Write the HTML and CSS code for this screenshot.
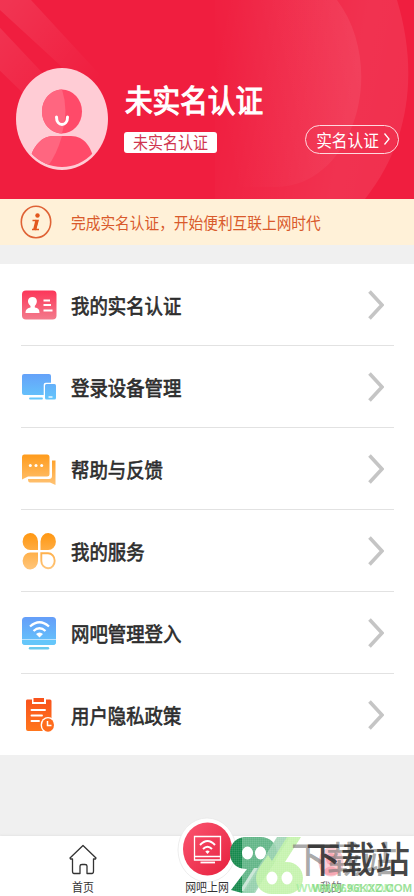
FILE: index.html
```html
<!DOCTYPE html>
<html lang="zh-CN">
<head>
<meta charset="utf-8">
<title>我的</title>
<link rel="stylesheet" href="styles.css">
</head>
<body>
<main class="screen">
  <header class="hero">
    <svg class="hero-bg" viewBox="0 0 414 200" preserveAspectRatio="none" aria-hidden="true">
      <defs>
        <linearGradient id="ring" x1="215" y1="60" x2="414" y2="100" gradientUnits="userSpaceOnUse"><stop offset="0" stop-color="#fff" stop-opacity="0"/><stop offset=".7" stop-color="#fff" stop-opacity=".09"/><stop offset="1" stop-color="#fff" stop-opacity=".08"/></linearGradient>
        <linearGradient id="disc" x1="215" y1="90" x2="361" y2="60" gradientUnits="userSpaceOnUse"><stop offset="0" stop-color="#fff" stop-opacity="0"/><stop offset="1" stop-color="#fff" stop-opacity=".07"/></linearGradient>
        <linearGradient id="beam" x1="0" y1="10" x2="95" y2="85" gradientUnits="userSpaceOnUse"><stop offset="0" stop-color="#fff" stop-opacity=".1"/><stop offset="1" stop-color="#fff" stop-opacity="0"/></linearGradient>
      </defs>
      <path d="M0 0H31L108 84H80L0 10Z M0 28L60 92L40 110L0 71Z" fill="url(#beam)"/>
      <path d="M215 0H397C418 70 411 142 365 200H215Z" fill="url(#ring)"/>
      <path d="M215 0H337C365 37 368 92 350 132C334 170 305 188 276 188H215Z" fill="url(#disc)"/>
    </svg>
    <svg class="avatar" viewBox="0 0 92 102" aria-hidden="true">
      <clipPath id="face"><ellipse cx="46" cy="49.5" rx="44.500" ry="49.500"/></clipPath>
      <ellipse cx="46" cy="51" rx="46" ry="51" fill="#ffccd5"/>
      <g clip-path="url(#face)">
        <path d="M12 102C13 84 23 68 37 68H55C69 68 77 80 80 102Z" fill="#ff4a69"/>
        <path d="M12 102C13 84 23 68 37 68H46Q40 89 29 102Z" fill="#ff6680"/>
      </g>
      <ellipse cx="46" cy="43.500" rx="20" ry="22" fill="#ff4a69"/>
      <path d="M46 21.500C35 21.500 26 31 26 43.500S35 65.500 46 65.500Q53 43 46 21.500Z" fill="#ff6680"/>
      <path d="M40.500 49C40.500 59 51.500 59 51.500 49" fill="none" stroke="#fff" stroke-width="3" stroke-linecap="round"/>
    </svg>
    <div class="identity">
      <h1><span class="tall">未实名认证</span></h1>
      <div class="status"><span class="tall">未实名认证</span></div>
    </div>
    <div class="verify"><span class="tall">实名认证</span>
      <svg width="8" height="14" viewBox="0 0 8 14"><path d="M1.500 1.500L6 7L1.500 12.500" fill="none" stroke="#fff" stroke-width="1.300"/></svg>
    </div>
  </header>
  <div class="notice">
    <svg width="32" height="34" viewBox="0 0 32 34"><ellipse cx="16" cy="17" rx="14.700" ry="15.700" fill="none" stroke="#df6336" stroke-width="1.600"/><circle cx="17.500" cy="10.500" r="2.200" fill="#e2571f"/><path d="M12.500 15.500H18L15.500 24.500H19M12 24.500H16" fill="none" stroke="#e2571f" stroke-width="1.500"/><path d="M16.900 15L14.500 25" stroke="#e2571f" stroke-width="3"/></svg>
    <span class="tall">完成实名认证，开始便利互联上网时代</span>
  </div>
  <svg class="defs" width="0" height="0" aria-hidden="true"><defs>
    <linearGradient id="red" x2="0" y2="1"><stop stop-color="#fc3659"/><stop offset="1" stop-color="#f37b8c"/></linearGradient>
    <linearGradient id="blue" x1="0" y1="4" x2="0" y2="33" gradientUnits="userSpaceOnUse"><stop stop-color="#659ff9"/><stop offset="1" stop-color="#64c8fb"/></linearGradient>
    <linearGradient id="orange" x1="0" y1="2" x2="0" y2="36" gradientUnits="userSpaceOnUse"><stop stop-color="#ff9814"/><stop offset="1" stop-color="#ffc477"/></linearGradient>
    <linearGradient id="fire" x2="0" y2="1"><stop stop-color="#f9531c"/><stop offset="1" stop-color="#ff761d"/></linearGradient>
  </defs></svg>
  <nav class="menu">
    <a class="row">
      <svg class="icon" viewBox="0 0 36 38"><rect x="1" y="4.500" width="34.500" height="29" rx="4" fill="url(#red)"/><path d="M4.500 27C4.500 23 7 22 9.500 21.500V20C5 16 7 11 11.500 11S17.500 16 13.800 20V21.500C17 22 18.500 23 18.500 27Z" fill="#fff"/><path d="M22.500 14.500H29M22.500 19H30M22.500 24.500H31.500" stroke="#fff" stroke-width="1.900"/></svg>
      <span class="tall">我的实名认证</span><svg class="chevron" viewBox="0 0 16 30"><path d="M1.500 1.500L14 15L1.500 28.500"/></svg>
    </a>
    <a class="row">
      <svg class="icon" viewBox="0 0 36 38"><rect x="1" y="6" width="29" height="21" rx="2" fill="url(#blue)"/><path d="M9 30.500H21" stroke="#65c7fb" stroke-width="1.800" stroke-linecap="round"/><rect x="22.700" y="14.700" width="14" height="19" rx="2" fill="#fff"/><rect x="24" y="16" width="11" height="15.500" rx="1.500" fill="url(#blue)"/><path d="M27.500 29H31.500" stroke="#fff" stroke-width="1.300"/></svg>
      <span class="tall">登录设备管理</span><svg class="chevron" viewBox="0 0 16 30"><path d="M1.500 1.500L14 15L1.500 28.500"/></svg>
    </a>
    <a class="row">
      <svg class="icon" viewBox="0 0 36 38"><path d="M31 10.500H34.500V35L29 32.500H9Q7 32.500 7 29H28Q31 29 31 26Z" fill="url(#orange)"/><path d="M3 4.500H26Q28.500 4.500 28.500 7V24Q28.500 26.500 26 26.500H7L1 29.500V7Q1 4.500 3 4.500Z" fill="url(#orange)"/><g fill="#fff"><circle cx="9.300" cy="15.500" r="1.500"/><circle cx="15" cy="15.500" r="1.500"/><circle cx="20.700" cy="15.500" r="1.500"/></g></svg>
      <span class="tall">帮助与反馈</span><svg class="chevron" viewBox="0 0 16 30"><path d="M1.500 1.500L14 15L1.500 28.500"/></svg>
    </a>
    <a class="row">
      <svg class="icon" viewBox="0 0 36 38"><path d="M17 18H9.500A7.700 8.500 0 1 1 17 9.500ZM19.500 18V9.500A7.700 8.500 0 1 1 27 18ZM17 20.500V29A7.700 8.500 0 1 1 9.500 20.500Z" fill="url(#orange)"/><path d="M20.300 21.300H27A6.700 7.500 0 1 1 20.300 29Z" fill="none" stroke="url(#orange)" stroke-width="1.900"/></svg>
      <span class="tall">我的服务</span><svg class="chevron" viewBox="0 0 16 30"><path d="M1.500 1.500L14 15L1.500 28.500"/></svg>
    </a>
    <a class="row">
      <svg class="icon" viewBox="0 0 36 38"><rect x="1" y="3" width="34" height="28" rx="3.500" fill="url(#blue)"/><path d="M1 25H35V28Q35 31 31.500 31H4.500Q1 31 1 28Z" fill="#65c6fa"/><path d="M1 25.500H35" stroke="#b9e2ff" stroke-width="1"/><path d="M9 34.300H27" stroke="#69c9ed" stroke-width="2.400" stroke-linecap="round"/><path d="M9 12.500Q18.500 4 28 12.500M12.500 17Q18.500 11.500 24.500 17" fill="none" stroke="#fff" stroke-width="2.300"/><path d="M15 20Q18.500 17 22 20L18.500 23.500Z" fill="#fff"/></svg>
      <span class="tall">网吧管理登入</span><svg class="chevron" viewBox="0 0 16 30"><path d="M1.500 1.500L14 15L1.500 28.500"/></svg>
    </a>
    <a class="row">
      <svg class="icon" viewBox="0 0 36 38"><path d="M6 3.500H11V8H25V3.500H29Q30.500 3.500 30.500 5V35H7Q5 35 5 33V5Q5 3.500 6 3.500Z" fill="url(#fire)"/><rect x="12.500" y="2" width="10.500" height="4" fill="#f9531c"/><path d="M10.500 14H24M10.500 19.500H21M10.500 25H18" stroke="#fff" stroke-width="1.900" stroke-linecap="round"/><ellipse cx="27" cy="29" rx="7.400" ry="8" fill="#fff"/><ellipse cx="27" cy="29" rx="6" ry="6.800" fill="#ff6c1d"/><path d="M26.500 25V29.500H30.500" fill="none" stroke="#fff" stroke-width="1.500"/></svg>
      <span class="tall">用户隐私政策</span><svg class="chevron" viewBox="0 0 16 30"><path d="M1.500 1.500L14 15L1.500 28.500"/></svg>
    </a>
  </nav>
  <footer class="tabs">
    <div class="tab">
      <svg width="28" height="32" viewBox="0 0 28 32"><path d="M3.500 15H1.500L1 14L14 1.500L27 14L26.500 15H24.500V27Q24.500 29.500 23 29.500H18V22Q18 20.500 16 20.500H13Q11 20.500 11 22V29.500H5Q3.500 29.500 3.500 27Z" fill="none" stroke="#333" stroke-width="1.300" stroke-linejoin="round"/></svg>
      <span class="tall">首页</span>
    </div>
    <div class="tab tab-center">
      <svg width="60" height="66" viewBox="0 0 60 66"><defs><linearGradient id="globe" x2="1" y2="1"><stop stop-color="#fb5570"/><stop offset="1" stop-color="#e6203d"/></linearGradient></defs><ellipse cx="30" cy="33" rx="29" ry="32" fill="#fff" stroke="#e8e8e8" stroke-width=".8"/><ellipse cx="30.500" cy="32" rx="24.500" ry="26.500" fill="url(#globe)"/><g fill="none" stroke="#fff"><path d="M17.500 19.500H43.500V43H17.500ZM17.500 39.500H43.500" stroke-width="1.300"/><path d="M23.500 45.500H38" stroke-width="1.800"/><path d="M23 28Q30.500 20 38 28M26 32Q30.500 27.500 35 32" stroke-width="2"/></g><path d="M28.300 34.500Q30.500 32.500 32.700 34.500L30.500 37Z" fill="#fff"/></svg>
      <span class="tall">网吧上网</span>
    </div>
    <div class="tab tab-me">
      <svg width="26" height="30" viewBox="0 0 26 30"><ellipse cx="13" cy="15" rx="12.500" ry="14.500" fill="#f8b8c1"/><ellipse cx="13" cy="12" rx="5" ry="6" fill="#f48494"/><path d="M4 25Q13 14 22 25Q13 32 4 25Z" fill="#f48494"/></svg>
      <span class="tall">我的</span>
    </div>
  </footer>
  <svg class="watermark" viewBox="0 0 184 64" aria-hidden="true">
    <defs>
      <pattern id="weave" width="2" height="2" patternUnits="userSpaceOnUse"><path d="M0 0H2M0 0V2" stroke="#fff" stroke-opacity=".22" stroke-width=".6"/></pattern>
      <clipPath id="left"><rect x="0" y="0" width="12" height="64"/></clipPath>
      <clipPath id="right"><rect x="12" y="0" width="172" height="64"/></clipPath>
      <path id="nine" fill-rule="evenodd" d="M16 5H30C41 5 47 12 47 21Q47 27 43 33L23 61H12L1 58L17 37H16C6 37 0 30 0 21S6 5 16 5ZM17.500 14.500A5.500 6.500 0 1 0 17.500 27.500A5.500 6.500 0 1 0 17.500 14.500ZM30.500 14.500A5.500 6.500 0 1 0 30.500 27.500A5.500 6.500 0 1 0 30.500 14.500Z"/>
    </defs>
    <use href="#nine" fill="#17894d" clip-path="url(#left)"/>
    <use href="#nine" fill="#62b587" clip-path="url(#right)"/>
    <path fill="#fff" fill-opacity=".65" d="M24 36H30L15 59H12V55Z"/>
    <path fill="#9bd3b1" fill-opacity=".9" d="M47 5H60L25 61H12Z"/>
    <path fill="#c0f2a6" fill-opacity=".9" fill-rule="evenodd" d="M57 5H71L55 30H57C66 30 73 37 73 46S66 62 57 62H42C32 62 26 55 26 46Q26 40 31 33L38 23L42 29ZM42 39.500A5.500 6.500 0 1 0 42 52.500A5.500 6.500 0 1 0 42 39.500ZM57 39.500A5.500 6.500 0 1 0 57 52.500A5.500 6.500 0 1 0 57 39.500Z"/>
    <rect x="0" y="4" width="74" height="60" fill="url(#weave)"/>
    <text class="mark-title mark-soft" x="61" y="41" textLength="106" lengthAdjust="spacingAndGlyphs">下载站</text>
    <text class="mark-title" x="76" y="41" textLength="104" lengthAdjust="spacingAndGlyphs">下载站</text>
    <text class="mark-url mark-light" x="66" y="60" textLength="98" lengthAdjust="spacingAndGlyphs">WWW.96XZ.COM</text>
    <text class="mark-url" x="82" y="60" textLength="100" lengthAdjust="spacingAndGlyphs">WWW.96KXZ.COM</text>
  </svg>
</main>
</body>
</html>
```
FILE: styles.css
```css
* { box-sizing: border-box; }
body { margin: 0; font-family: "Noto Sans CJK SC", sans-serif; color: #2d2d2d; background: #f0f0f0; }
.screen { position: relative; width: 414px; height: 896px; overflow: hidden; display: flex; flex-direction: column; background: #f0f0f0; }
.tall { display: inline-block; white-space: nowrap; transform: scaleY(1.1); }
.hero { position: relative; height: 199px; flex: none; display: flex; background: #f01e3f; color: #fff; padding: 68px 15px 0 16px; }
.hero-bg { position: absolute; inset: 0; width: 100%; height: 100%; }
.avatar { position: relative; width: 92px; height: 102px; flex: none; }
.identity { position: relative; margin-left: 16px; flex: 1; }
h1 { margin: 15px 0 0 1px; font-size: 27.600px; line-height: 32px; font-weight: 400; -webkit-text-stroke: 1.100px #fff; }
.status { margin-top: 17px; width: 93px; height: 21px; border-radius: 3px; background: #fff; color: #cf3650; font-size: 15px; line-height: 19px; text-align: center; }
.verify { position: relative; width: 94px; height: 29px; margin-top: 57px; border: 1px solid #ffd9df; border-radius: 15px; display: flex; align-items: center; justify-content: center; gap: 4px; font-size: 15.700px; line-height: 25px; padding: 0 0 1px 3px; }
.notice { height: 46px; flex: none; display: flex; align-items: center; gap: 19px; padding: 0 20px 1px; background: #fff1d8; color: #d95a2c; font-size: 14.700px; line-height: 24px; }
.defs { position: absolute; }
.menu { margin-top: 19px; height: 491px; flex: none; background: #fff; padding: 0 20px 0 21px; }
.row { height: 82px; display: flex; align-items: center; border-bottom: 1px solid #e2e2e2; font-size: 18.400px; line-height: 26px; font-weight: 400; -webkit-text-stroke: .6px #2d2d2d; }
.row:last-child { border: 0; height: 81px; }
.icon { width: 36px; height: 38px; margin-right: 14px; }
.chevron { width: 16px; height: 30px; margin-left: auto; margin-right: 10px; fill: none; stroke: #c5c5c5; stroke-width: 3.600; }
.tabs { margin-top: 81px; height: 60px; flex: none; display: flex; background: #fff; box-shadow: 0 -1px 2px #e5e5e5; color: #333; font-size: 10.900px; line-height: 14px; }
.tab { width: 166px; display: flex; flex-direction: column; align-items: center; padding-top: 8px; gap: 4px; }
.tab-center { width: 82px; padding-top: 0; margin-top: -19px; gap: 0; }
.tab-center .tall { margin-top: -3px; }
.tab-me { opacity: .7; padding-top: 11px; gap: 3px; }
.watermark { position: absolute; left: 230px; top: 832px; width: 184px; height: 64px; }
.mark-title { font: 500 36px "Noto Sans CJK SC", sans-serif; fill: #2d2d2d; fill-opacity: .88; }
.mark-soft { fill: #777; fill-opacity: .65; }
.mark-url { font: 700 11.500px "Liberation Sans", sans-serif; fill: #83da80; fill-opacity: .8; }
.mark-light { fill: #a2eca0; }
```
